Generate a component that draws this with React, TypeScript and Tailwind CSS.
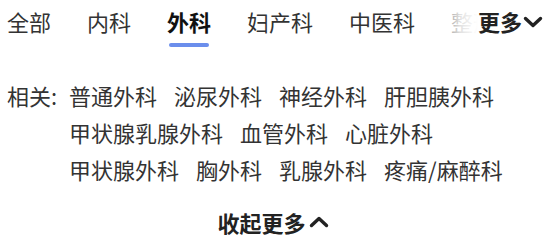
import { useState } from "react";

const tabs = ["全部", "内科", "外科", "妇产科", "中医科", "整形科"];

const related = [
  "普通外科",
  "泌尿外科",
  "神经外科",
  "肝胆胰外科",
  "甲状腺乳腺外科",
  "血管外科",
  "心脏外科",
  "甲状腺外科",
  "胸外科",
  "乳腺外科",
  "疼痛/麻醉科",
];

function ChevronDown() {
  return (
    <svg width="20" height="12" viewBox="0 0 20 12" className="text-[#222]">
      <polyline points="2.5,2.5 10,9.5 17.5,2.5" fill="none" stroke="currentColor" strokeWidth="3.4" strokeLinecap="round" strokeLinejoin="round" />
    </svg>
  );
}

function ChevronUp() {
  return (
    <svg width="20" height="12" viewBox="0 0 20 12" className="text-[#222]">
      <polyline points="2.5,9.5 10,2.5 17.5,9.5" fill="none" stroke="currentColor" strokeWidth="3.4" strokeLinecap="round" strokeLinejoin="round" />
    </svg>
  );
}

export default function App() {
  const [active, setActive] = useState("外科");

  return (
    <div
      className="w-[550px] h-[245px] bg-white overflow-hidden text-[#333]"
      style={{ fontFamily: '"Noto Sans CJK SC", "Noto Sans", sans-serif' }}
    >
      {/* Department tabs */}
      <div className="flex h-[56px]">
        <div className="relative w-[478px] shrink-0 overflow-hidden">
          <div className="flex gap-[36px] pl-[7px] pt-[9px] whitespace-nowrap">
            {tabs.map((t) => {
              const isActive = t === active;
              return (
                <button
                  key={t}
                  onClick={() => setActive(t)}
                  className="flex flex-col items-center shrink-0"
                >
                  <span
                    className={`text-[22px] leading-[24px] ${
                      isActive ? "font-bold text-[#111]" : "text-[#333]"
                    }`}
                  >
                    {t}
                  </span>
                  <span
                    className={`mt-[10px] w-[40px] h-[4px] rounded-full ${
                      isActive ? "bg-[#6b8eec]" : "bg-transparent"
                    }`}
                  />
                </button>
              );
            })}
          </div>
          {/* fade-out over the clipped tab */}
          <div className="absolute right-0 top-0 w-[36px] h-full bg-gradient-to-r from-white/40 via-white/85 to-white" />
        </div>
        <div className="flex items-start pt-[9px] gap-[1px]">
          <span className="text-[22px] leading-[24px] font-bold text-[#222]">更多</span>
          <span className="pt-[7px]">
            <ChevronDown />
          </span>
        </div>
      </div>

      {/* Related list */}
      <div className="flex pl-[7px] pt-[21px]">
        <span className="w-[62px] shrink-0 text-[22px] leading-[37px]">相关:</span>
        <div className="flex flex-wrap gap-x-[17px] w-[470px]">
          {related.map((r) => (
            <span key={r} className="text-[22px] leading-[37px] whitespace-nowrap">
              {r}
            </span>
          ))}
        </div>
      </div>

      {/* Collapse */}
      <div className="flex justify-center items-center gap-[3px] pt-[22px] pr-[4px]">
        <span className="text-[22px] leading-[24px] font-bold text-[#222]">收起更多</span>
        <ChevronUp />
      </div>
    </div>
  );
}
